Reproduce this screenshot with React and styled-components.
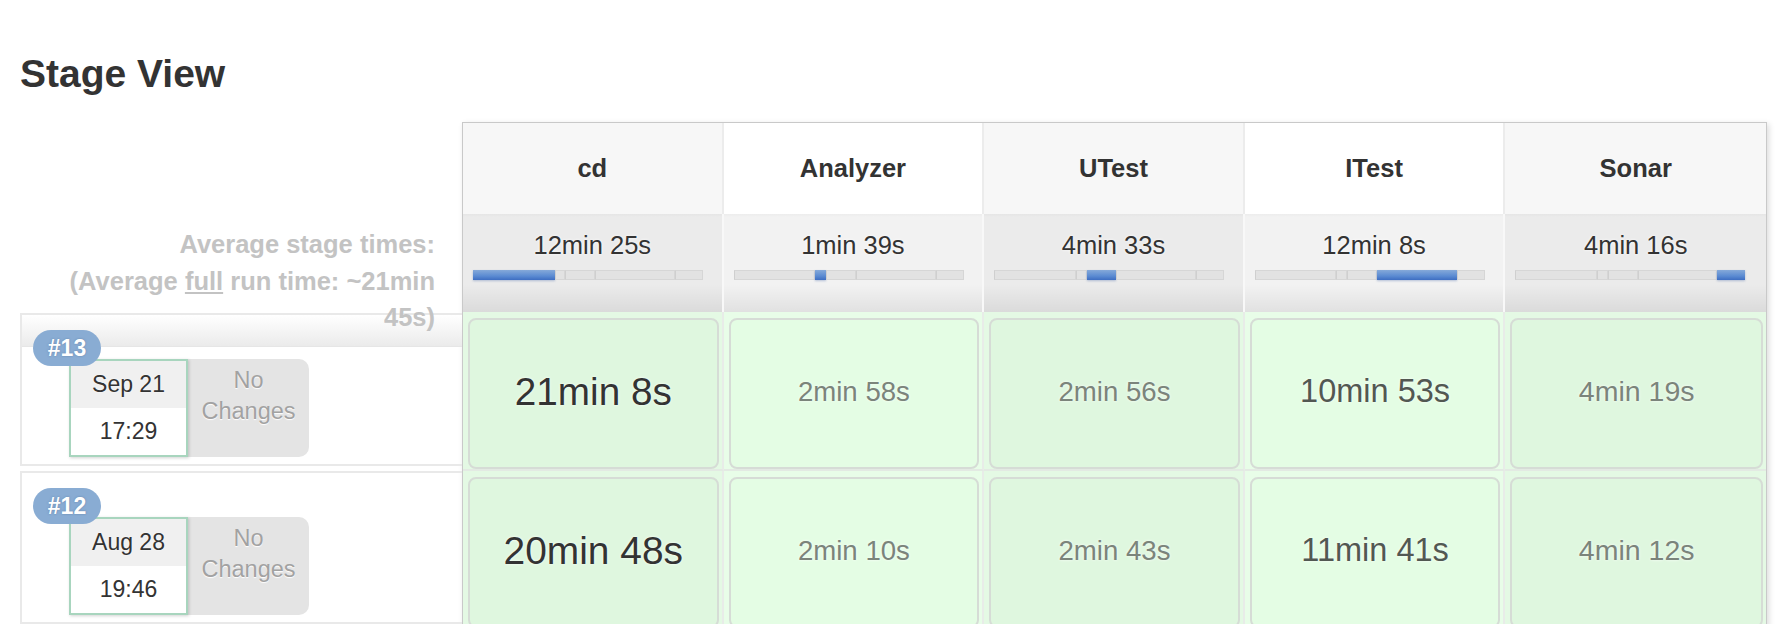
import React from 'react';
import styled, { createGlobalStyle, css } from 'styled-components';

const GlobalStyle = createGlobalStyle`
  html, body { margin: 0; padding: 0; background: #fff; overflow: hidden; }
  body {
    font-family: "Liberation Sans", Arial, Helvetica, sans-serif;
    color: #333;
  }
`;

const stages = [
  { name: 'cd', avg: '12min 25s', secs: 745 },
  { name: 'Analyzer', avg: '1min 39s', secs: 99 },
  { name: 'UTest', avg: '4min 33s', secs: 273 },
  { name: 'ITest', avg: '12min 8s', secs: 728 },
  { name: 'Sonar', avg: '4min 16s', secs: 256 },
];

const runs = [
  {
    id: '#13', date: 'Sep 21', time: '17:29',
    cells: [
      { t: '21min 8s', size: 38.7, tone: 'dark' },
      { t: '2min 58s', size: 27.6, tone: 'light' },
      { t: '2min 56s', size: 27.6, tone: 'light' },
      { t: '10min 53s', size: 32.5, tone: 'mid' },
      { t: '4min 19s', size: 28.5, tone: 'light' },
    ],
  },
  {
    id: '#12', date: 'Aug 28', time: '19:46',
    cells: [
      { t: '20min 48s', size: 38.9, tone: 'dark' },
      { t: '2min 10s', size: 27.6, tone: 'light' },
      { t: '2min 43s', size: 27.6, tone: 'light' },
      { t: '11min 41s', size: 32.5, tone: 'mid' },
      { t: '4min 12s', size: 28.5, tone: 'light' },
    ],
  },
];

const toneColor = { dark: '#333', mid: '#525852', light: '#7b847b' };

const Page = styled.div`
  padding: 50px 0 0 20px;
`;

const Title = styled.h2`
  margin: 0;
  font-size: 39px;
  line-height: 47px;
  font-weight: bold;
  color: #333;
`;

const StageView = styled.div`
  display: flex;
  align-items: flex-start;
  margin-top: 25px;
`;

const Side = styled.div`
  width: 442px;
  flex: none;
  display: flex;
  flex-direction: column;
`;

const SideHeaderSpacer = styled.div`
  height: 92px;
`;

const AvgLabel = styled.div`
  height: 98px;
  box-sizing: border-box;
  padding: 12px 27px 0 20px;
  text-align: right;
  font-weight: bold;
  font-size: 25.5px;
  line-height: 36.5px;
  color: #c3c3c3;
  position: relative;
  z-index: 2;
`;

const Underlined = styled.span`
  text-decoration: underline;
`;

const RunRow = styled.div`
  position: relative;
  height: 153px;
  box-sizing: border-box;
  border: 2px solid #e9e9e9;
  border-right: none;
  margin-top: ${(p) => (p.$first ? '1px' : '5px')};
  padding: 44px 0 0 47px;
  ${(p) =>
    p.$first &&
    css`
      &::before {
        content: '';
        position: absolute;
        left: 0;
        right: 0;
        top: 0;
        height: 31px;
        background: linear-gradient(#ffffff, #ebebeb);
        border-bottom: 1px solid #e6e6e6;
      }
    `}
`;

const Badge = styled.div`
  position: absolute;
  left: 11px;
  top: 15px;
  z-index: 3;
  width: 68px;
  height: 36px;
  border-radius: 18px;
  background: #89acd3;
  color: #fff;
  font-weight: bold;
  font-size: 23px;
  line-height: 36px;
  text-align: center;
  text-shadow: 0 0 2px rgba(60, 90, 130, 0.5);
`;

const RunCard = styled.div`
  position: relative;
  display: flex;
  align-items: stretch;
  height: 98px;
`;

const DateBox = styled.div`
  position: relative;
  z-index: 2;
  width: 119px;
  box-sizing: border-box;
  border: 2px solid #a8d5be;
  background: #fff;
  display: flex;
  flex-direction: column;
  box-shadow: 1px 1px 3px rgba(0, 0, 0, 0.18);
`;

const DatePart = styled.div`
  flex: 1;
  display: flex;
  align-items: center;
  justify-content: center;
  font-size: 23px;
  color: #333;
  background: ${(p) => (p.$top ? '#f0f0f0' : '#fff')};
  text-shadow: 0 0 2px rgba(255, 255, 255, 0.9);
`;

const ChangesBox = styled.div`
  width: 121px;
  box-sizing: border-box;
  background: #e4e4e4;
  border-radius: 0 10px 10px 0;
  padding-top: 6px;
  text-align: center;
  font-size: 23.5px;
  line-height: 31px;
  color: #a2a2a2;
  text-shadow: 0 1px 1px #fff;
`;

const Table = styled.div`
  flex: none;
  width: 1305px;
  box-sizing: border-box;
  border: 1px solid #c9c9c9;
  box-shadow: 2px 2px 6px rgba(0, 0, 0, 0.14);
  display: grid;
  grid-template-columns: repeat(5, 1fr);
`;

const HeadCell = styled.div`
  height: 91px;
  display: flex;
  align-items: center;
  justify-content: center;
  font-weight: bold;
  font-size: 25.5px;
  color: #333;
  background: ${(p) => (p.$odd ? '#f7f7f7' : '#ffffff')};
  border-right: ${(p) => (p.$last ? 'none' : '2px solid #ececec')};
`;

const AvgCell = styled.div`
  height: 98px;
  box-sizing: border-box;
  padding-top: 16px;
  background-color: ${(p) => (p.$odd ? '#ebebeb' : '#f2f2f2')};
  background-image: linear-gradient(to bottom, rgba(0, 0, 0, 0.025) 0, rgba(0, 0, 0, 0) 3px, rgba(0, 0, 0, 0) 72%, rgba(0, 0, 0, 0.07) 100%);
  border-right: ${(p) => (p.$last ? 'none' : '2px solid #f8f8f8')};
`;

const AvgTime = styled.div`
  text-align: center;
  font-size: 25.5px;
  line-height: 30px;
  color: #333;
  text-shadow: 0 0 3px #fff;
`;

const Bar = styled.div`
  display: flex;
  width: 230px;
  height: 10px;
  margin: 10px 0 0 10px;
`;

const Seg = styled.div`
  height: 100%;
  box-sizing: border-box;
  flex: none;
  ${(p) =>
    p.$active
      ? css`
          background: linear-gradient(#85a9d9, #5b8bd2 60%, #3e6ec2);
          box-shadow: 0 1px 2px rgba(40, 80, 160, 0.3);
        `
      : css`
          background: #e2e2e2;
          border: 1px solid #d6d6d6;
          border-left-color: #cfcfcf;
        `}
`;

const RunCell = styled.div`
  box-sizing: border-box;
  padding: 6px 3px 0 5px;
  background: ${(p) => (p.$odd ? '#e4f9e4' : '#e8fde8')};
  border-right: ${(p) => (p.$last ? 'none' : '2px solid #e8ece8')};
  border-bottom: 2px solid #e3eae3;
`;

const StageBox = styled.div`
  height: 151px;
  box-sizing: border-box;
  border: 2px solid #d6dcd6;
  border-radius: 8px;
  padding-bottom: 4px;
  background: ${(p) => (p.$odd ? '#dff7df' : '#e4fde4')};
  display: flex;
  align-items: center;
  justify-content: center;
`;

const Duration = styled.span`
  font-size: ${(p) => p.$size}px;
  color: ${(p) => toneColor[p.$tone]};
  text-shadow: 0 0 3px rgba(255, 255, 255, 0.9);
  white-space: nowrap;
`;

const totalSecs = stages.reduce((s, x) => s + x.secs, 0);

export default function App() {
  return (
    <>
      <GlobalStyle />
      <Page>
        <Title>Stage View</Title>
        <StageView>
          <Side>
            <SideHeaderSpacer />
            <AvgLabel>
              <div>Average stage times:</div>
              <div>
                (Average <Underlined>full</Underlined> run time: ~21min 45s)
              </div>
            </AvgLabel>
            {runs.map((r, i) => (
              <RunRow key={r.id} $first={i === 0}>
                <Badge>{r.id}</Badge>
                <RunCard>
                  <DateBox>
                    <DatePart $top>{r.date}</DatePart>
                    <DatePart>{r.time}</DatePart>
                  </DateBox>
                  <ChangesBox>
                    No
                    <br />
                    Changes
                  </ChangesBox>
                </RunCard>
              </RunRow>
            ))}
          </Side>
          <Table>
            {stages.map((s, i) => (
              <HeadCell key={s.name} $odd={i % 2 === 0} $last={i === stages.length - 1}>
                {s.name}
              </HeadCell>
            ))}
            {stages.map((s, i) => (
              <AvgCell key={s.name} $odd={i % 2 === 0} $last={i === stages.length - 1}>
                <AvgTime>{s.avg}</AvgTime>
                <Bar>
                  {stages.map((seg, j) => (
                    <Seg
                      key={seg.name}
                      $active={j === i}
                      style={{ width: `${(seg.secs / totalSecs) * 230}px` }}
                    />
                  ))}
                </Bar>
              </AvgCell>
            ))}
            {runs.map((r) =>
              r.cells.map((c, i) => (
                <RunCell key={r.id + i} $odd={i % 2 === 0} $last={i === r.cells.length - 1}>
                  <StageBox $odd={i % 2 === 0}>
                    <Duration $size={c.size} $tone={c.tone}>
                      {c.t}
                    </Duration>
                  </StageBox>
                </RunCell>
              ))
            )}
          </Table>
        </StageView>
      </Page>
    </>
  );
}
